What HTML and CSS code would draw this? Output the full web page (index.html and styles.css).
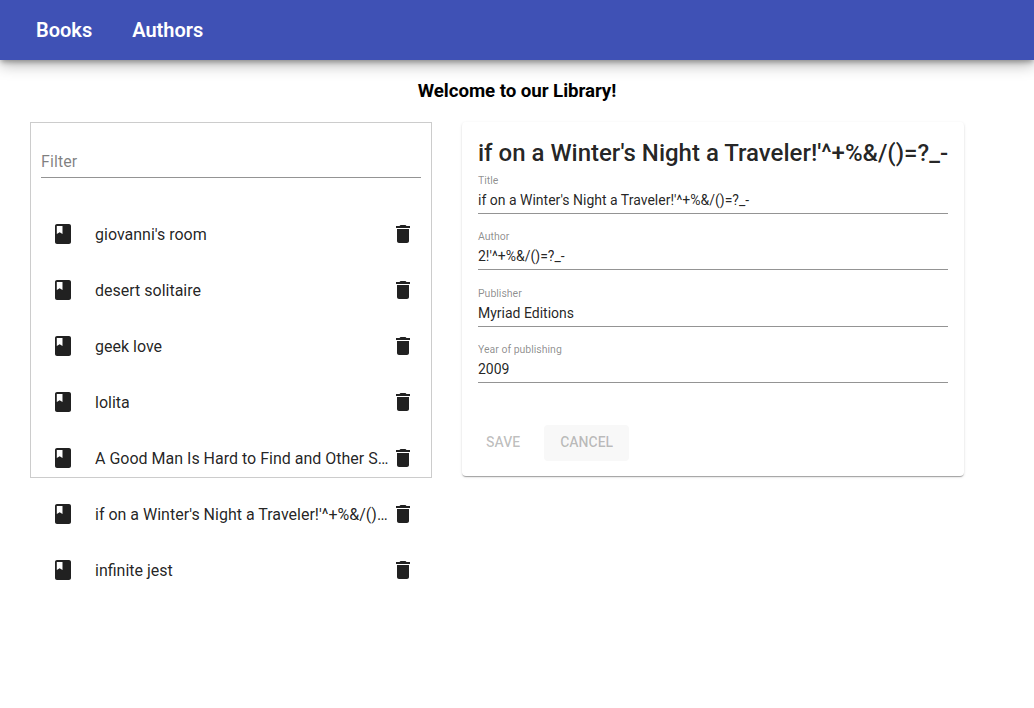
FILE: index.html
```html
<!DOCTYPE html>
<html lang="en">
<head>
<meta charset="utf-8">
<title>Library</title>
<link rel="stylesheet" href="styles.css">
</head>
<body>
<svg class="defs" width="0" height="0">
  <symbol id="book" viewBox="0 0 24 24"><path d="M18 2H6c-1.100 0-2 .9-2 2v16c0 1.100.9 2 2 2h12c1.100 0 2-.9 2-2V4c0-1.100-.9-2-2-2zM5.800 4h5.700v8l-2.850-1.700L5.800 12V4z"/></symbol>
  <symbol id="trash" viewBox="0 0 24 24"><path d="M6 19c0 1.100.9 2 2 2h8c1.100 0 2-.9 2-2V7H6v12zM19 4h-3.500l-1-1h-5l-1 1H5v2h14V4z"/></symbol>
</svg>
<nav class="toolbar"><a class="link">Books</a><a class="link">Authors</a></nav>
<h3 class="welcome">Welcome to our Library!</h3>
<main class="content">
  <section class="list-panel">
    <div class="filter">Filter</div>
    <ul class="books">
      <li class="book"><svg class="icon"><use href="#book"/></svg><span class="name">giovanni's room</span><svg class="icon"><use href="#trash"/></svg></li>
      <li class="book"><svg class="icon"><use href="#book"/></svg><span class="name">desert solitaire</span><svg class="icon"><use href="#trash"/></svg></li>
      <li class="book"><svg class="icon"><use href="#book"/></svg><span class="name">geek love</span><svg class="icon"><use href="#trash"/></svg></li>
      <li class="book"><svg class="icon"><use href="#book"/></svg><span class="name">lolita</span><svg class="icon"><use href="#trash"/></svg></li>
      <li class="book"><svg class="icon"><use href="#book"/></svg><span class="name">A Good Man Is Hard to Find and Other Stories</span><svg class="icon"><use href="#trash"/></svg></li>
      <li class="book"><svg class="icon"><use href="#book"/></svg><span class="name">if on a Winter's Night a Traveler!'^+%&amp;/()=?_-</span><svg class="icon"><use href="#trash"/></svg></li>
      <li class="book"><svg class="icon"><use href="#book"/></svg><span class="name">infinite jest</span><svg class="icon"><use href="#trash"/></svg></li>
    </ul>
  </section>
  <section class="card">
    <h2 class="card-title">if on a Winter's Night a Traveler!'^+%&amp;/()=?_-</h2>
    <div class="field"><span class="label">Title</span><span class="value">if on a Winter's Night a Traveler!'^+%&amp;/()=?_-</span></div>
    <div class="field"><span class="label">Author</span><span class="value">2!'^+%&amp;/()=?_-</span></div>
    <div class="field"><span class="label">Publisher</span><span class="value">Myriad Editions</span></div>
    <div class="field"><span class="label">Year of publishing</span><span class="value">2009</span></div>
    <div class="actions"><button class="btn" disabled>SAVE</button><button class="btn cancel" disabled>CANCEL</button></div>
  </section>
</main>
</body>
</html>
```
FILE: styles.css
```css
* { box-sizing: border-box; }
html { height: 100%; }
body { margin: 0; min-height: 708px; background: #fff; color: rgba(0,0,0,.87); font-family: Roboto, "Liberation Sans", sans-serif; }
.defs { display: block; height: 0; }
.toolbar { height: 60px; padding: 0 36px; display: flex; align-items: center; gap: 40px; background: #3f51b5; box-shadow: 0 3px 5px -1px rgba(0,0,0,.3), 0 5px 14px rgba(0,0,0,.28); }
.link { color: #fff; font-size: 20px; font-weight: 600; line-height: 32px; }
.welcome { margin: 20px 0 0; height: 22px; text-align: center; font-size: 18.720px; font-weight: 700; line-height: 22px; letter-spacing: -.06px; color: #000; }
.content { display: flex; align-items: flex-start; gap: 30px; height: 606px; padding: 20px 30px 0; }
.list-panel { width: 402px; height: 356px; padding: 0 10px; border: 1px solid #ccc; }
.filter { height: 55px; padding-top: 30px; border-bottom: 1px solid #949494; font-size: 16px; line-height: 18px; letter-spacing: .1px; color: rgba(0,0,0,.5); }
.books { list-style: none; margin: 0; padding: 28px 6px 0 10px; }
.book { height: 56px; display: flex; align-items: center; font-size: 16px; }
.icon { width: 24px; height: 24px; flex: none; fill: #212121; }
.name { flex: 1; min-width: 0; margin-left: 20px; padding-top: 2px; overflow: hidden; text-overflow: ellipsis; white-space: nowrap; line-height: 24px; }
.card { width: 502px; height: 354px; padding: 16px; border-radius: 4px; box-shadow: 0 2px 1px -1px rgba(0,0,0,.2), 0 1px 1px rgba(0,0,0,.14), 0 1px 3px rgba(0,0,0,.12); }
.card-title { margin: 0; height: 30px; font-size: 24px; font-weight: 500; line-height: 30px; white-space: nowrap; }
.field { height: 46px; margin-bottom: 10.300px; padding-top: 7px; display: flex; flex-direction: column; border-bottom: 1px solid #949494; }
.label { font-size: 10.500px; line-height: 12px; color: rgba(0,0,0,.46); }
.value { margin-top: 5px; font-size: 14px; line-height: 16px; }
.actions { display: flex; padding-top: 32px; gap: 16px; }
.btn { height: 36px; padding: 0 8px 2px; border: 0; border-radius: 4px; background: none; font: 500 14px/34px Roboto, "Liberation Sans", sans-serif; color: rgba(0,0,0,.26); }
.cancel { padding: 0 16px 2px; background: #f8f8f8; }
```
